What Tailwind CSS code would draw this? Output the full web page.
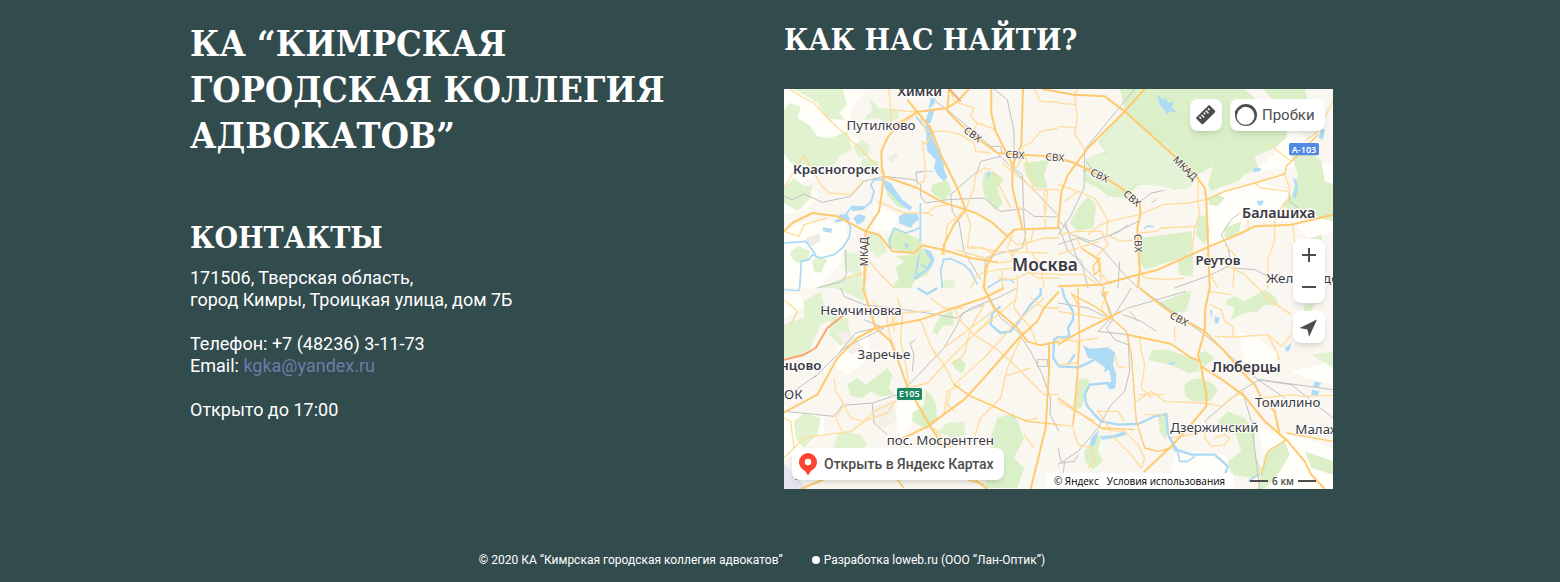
<!DOCTYPE html>
<html lang="ru">
<head>
<meta charset="utf-8">
<meta name="viewport" content="width=device-width, initial-scale=1">
<title>КА “Кимрская городская коллегия адвокатов”</title>
<script src="https://cdn.jsdelivr.net/npm/@tailwindcss/browser@4"></script>
</head>
<body class="min-h-screen bg-[#324b4d] text-white font-['Noto_Sans',sans-serif]">
<main class="mx-auto grid max-w-[1180px] grid-cols-2 gap-2">
  <section class="pt-5">
    <h1 class="max-w-[500px] font-['DejaVu_Serif_Condensed','DejaVu_Serif',serif] text-[36px] leading-[46px] font-bold uppercase">КА “Кимрская городская коллегия адвокатов”</h1>
    <h2 class="mt-[62px] font-['DejaVu_Serif_Condensed','DejaVu_Serif',serif] text-[30px] leading-9 font-bold uppercase">Контакты</h2>
    <address class="mt-[11px] font-[Roboto,sans-serif] text-[18px] leading-[22px] not-italic">
      <p>171506, Тверская область,<br>город Кимры, Троицкая улица, дом 7Б</p>
      <p class="mt-[22px]">Телефон: +7 (48236) 3-11-73<br>Email: <a href="mailto:kgka@yandex.ru" class="text-[#6b7da8]">kgka@yandex.ru</a></p>
      <p class="mt-[22px]">Открыто до 17:00</p>
    </address>
  </section>
  <section class="pt-[22px] pr-[37px]">
    <h2 class="font-['DejaVu_Serif_Condensed','DejaVu_Serif',serif] text-[30px] leading-9 font-bold uppercase">Как нас найти?</h2>
    <div class="relative mt-[31px] h-[400px] overflow-hidden bg-[#faf6f0] text-[#4d4d4d]">
      <svg class="size-full" viewBox="0 0 1647 1200" preserveAspectRatio="xMidYMid slice" fill="none" stroke-linejoin="round" role="img" aria-label="Карта Москвы">
        <!-- north-west -->
        <g transform="translate(0 -3)">
          <g fill="#fffef8">
            <path d="M0 0H250L205 60 190 130 235 165 150 215 60 200 95 260 50 290 110 320 60 370 0 380z"/>
            <path d="M0 430L60 400 180 395 190 440 170 520 140 560 100 600H0zM270 345L340 380 330 430 270 425z"/>
          </g>
          <g fill="#e0f2d0">
            <path d="M30 3H175L190 50 165 75 185 95 130 92 100 45 60 20zM0 65L15 45 50 55 40 90 75 110 100 145 140 150 190 130 205 185 165 205 150 232 100 250 60 230 40 245 0 200z"/>
            <path d="M265 65L255 30 285 60 340 65 345 90 310 110 285 90 240 95 250 80zM205 175L235 155 258 175 250 205 225 208zM0 300L30 270 60 295 85 290 80 330 40 370 0 345zM235 210L285 220 275 255 230 250zM20 490L45 475 78 490 70 520 40 525 20 505zM85 520L100 505 130 515 110 555 90 550z"/>
          </g>
          <g fill="#d9f0c4">
            <path d="M445 290L490 275 503 310 480 340 455 325 440 310zM600 255L630 250 660 275 640 300 655 345 635 370 600 320 595 290zM718 225L795 215 780 260 790 300 755 300 725 260zM330 420L410 455 415 480 375 495 320 480 310 455zM380 500L415 480 450 520 430 560 395 575 380 600H325L345 570 335 540 360 520 335 505zM300 285L330 300 350 330 375 365 340 355 310 320z"/>
            <path d="M250 435L290 440 310 490 280 510 250 480zM180 490L230 500 230 560 180 545zM480 575H512V600H470zM100 600L230 550 240 600z" fill="#e3f3d5"/>
          </g>
          <path d="M310 210L335 195 345 200 320 225zM65 450L105 435 110 460 75 480z" fill="#efebe6"/>
          <g fill="#aedbf5">
            <path d="M440 30L455 32 452 45 435 65 452 65 440 105 422 105 432 75zM425 108L438 110 448 155 465 190 478 215 480 245 490 268 480 280 460 260 450 240 455 215 430 190zM345 385L365 375 400 378 405 395 390 405 380 420 345 405zM200 355L245 355 240 365 205 370zM208 390L225 378 245 385 240 400 220 410zM115 418L145 422 140 435 118 430zM165 378L190 380 200 395 150 405 155 395 170 390zM360 465L375 470 368 485zM608 250L620 255 612 275z"/>
            <path d="M300 275L320 285 330 300 355 335 385 358 378 368 345 345 320 315 303 300zM420 480L440 490 452 515 440 540 395 575 385 570 430 540 440 515 425 495z"/>
          </g>
          <g stroke="#a9d9f5" stroke-width="5">
            <path d="M395 85L425 120M300 275H270L260 290 270 310 262 340 240 360 205 355 185 380 200 420 195 450 175 480 150 500 110 510 85 500 75 515 52 520 47 600M0 465L65 460 95 500M320 480L315 460 330 420 365 435 395 425 412 415M409 345V460M475 515L500 512 540 530 560 550 580 590M480 515L470 545 475 600M405 500L395 560M410 530L430 540M610 600L650 575 680 575 690 585"/>
            <path d="M395 250H450" stroke-width="2"/>
          </g>
          <g stroke="#c2c2c2" stroke-width="3">
            <path d="M0 325L25 335 60 318 115 343 200 325 240 280 300 265 390 275 410 290V325L425 345 490 335 600 330 650 370 720 362 750 385 820 387M400 280L395 255 420 250M455 40L490 65 620 175 660 215 825 385M630 3L670 35 690 130V240L715 260 720 400 725 440 715 480 640 498 605 510 600 600M650 205L590 220 580 250 500 320 505 370 525 400 540 490 590 575M548 495L600 510M185 485L187 560 175 580 100 600M620 175H650L655 200"/>
          </g>
          <g stroke="#ffdd9d" stroke-width="4">
            <path d="M0 300L60 200 110 290 135 315 200 320 240 275M0 430L45 445 60 410 130 390M315 3L320 65 320 120 350 110M350 110L400 75M450 130L425 170 415 160 425 250 420 280M320 65L370 70 400 72M410 90L425 130 490 130 530 140 570 165 575 190 620 195M395 290L420 280M450 385L430 375 360 375 305 350 280 340M430 375L455 355 500 350M500 3L510 40 570 60 560 85 580 105 570 130M580 105L635 125M750 3L770 40 825 42M715 175L740 165 770 130 825 120M620 245L600 240 575 260 570 300 545 365 490 410 480 500M545 370L560 410 550 480 600 480 630 500M625 255L650 300 680 360M655 225L750 305H825M715 180L740 260 750 310M780 310V330L785 420M780 310H790L785 370M720 200L700 235 685 240M720 360L705 360M255 520L290 560 330 600M180 575L235 555M250 525L240 600M515 485L600 510 640 525 680 520 690 495 730 465 780 450 825 450M560 600L580 560 640 545 700 540M620 500L610 540 595 600M670 445L700 470 740 460 750 420M690 425L670 480 700 530 760 570 825 570M740 490L770 530 780 600M640 570L690 575 730 555 825 560M560 475L640 490 790 495M655 545V600M700 560V600M730 490L720 420"/>
            <path d="M20 5L60 30 90 45 130 90 185 140 205 160 280 235 300 262"/>
          </g>
          <g stroke="#ffca6e" stroke-width="6">
            <path d="M555 3L520 40 490 60 400 72 345 105 310 150 292 190 293 235 300 265 290 340 285 370 245 430 240 600M370 35L400 72 440 120 475 210 520 300 545 365 575 375 620 400 670 445 690 425 825 420M300 265L400 300 470 340 545 365M0 430L25 405 85 375 160 385 245 430 285 440 325 490 390 495 415 472 475 485 560 510 640 522M495 3L490 70 530 110 560 135 640 195 825 207M622 3V75L635 130 660 180 685 230V300L715 420M717 3L712 170 685 235M670 445L630 495 605 540 600 600M545 365L510 410 480 470 475 500M775 3L825 12"/>
            <path d="M495 3L530 40" stroke="#fba76a"/>
          </g>
        </g>
        <!-- north-east -->
        <g transform="translate(822 -3)">
          <g fill="#fffef8">
            <path d="M450 330L520 300 600 280 700 310 770 240 828 220V430L760 460 700 400 560 400 500 470 450 470zM660 130L720 120 780 200 700 240 590 250 660 190z"/>
          </g>
          <g fill="#dbf0c8">
            <path d="M185 3H560L600 40 640 70 690 110 685 150 650 180 590 205 600 240 560 260 540 280 480 300 460 310 450 290 465 235 420 260 395 300 350 305 310 290 240 290 205 330 150 325 120 300 80 280 85 210 120 200 140 190 120 160 200 70zM60 360L90 325 115 350 105 420 60 430 35 405zM250 450L360 435 400 430 405 480 385 505 260 545 245 520zM450 330L480 320 500 330 480 355 455 350z"/>
            <path d="M615 3H740L750 40 700 55 650 40zM700 200L740 170 790 220 800 280 828 290V400L780 390 760 360 700 370 670 350 700 320 720 260zM415 390L445 380 455 430 440 470 415 440zM500 420L550 400 540 440 500 450zM720 470L760 450 790 440 800 500 730 500zM360 520L405 490V565L365 560z"/>
          </g>
          <path d="M85 210L120 195 150 200 130 160 200 75 310 160 345 185 420 260 395 300 350 300 240 285 205 305 150 300 85 265z" fill="#e4f2d6"/>
          <path d="M0 3H185L200 70 120 160 140 190 85 210 0 200z" fill="#faf6f0"/>
          <g fill="#aedbf5">
            <path d="M298 20L315 35 325 30 330 45 350 40 340 58 360 75 335 70 328 80 315 60 305 50zM790 120L800 125 795 155 782 150zM585 240L608 242 605 250 585 253zM597 338L618 338 612 352 600 352zM705 270L715 275 720 300 712 335 705 325 712 295z"/>
          </g>
          <path d="M258 422L270 414 288 416M590 240L610 245" stroke="#a9d9f5" stroke-width="4"/>
          <g stroke="#c2c2c2" stroke-width="3">
            <path d="M230 3L80 185 78 300 35 390 0 440M0 395L40 440 100 460 160 440 240 400M240 345L280 315 320 307M280 345L295 335M85 220L100 240 75 250M545 375L520 395 490 440 510 480 520 530 460 560 350 600M150 445L185 430 210 410M0 410L30 490 70 520 90 600M20 400L60 520 140 600M0 470L60 450 130 480 200 560 240 600M695 300V340L720 360M525 540L590 545 640 570 700 580M185 520L180 600"/>
          </g>
          <g stroke="#ffdd9d" stroke-width="4">
            <path d="M60 3L50 20 58 90 50 140 80 185M0 45L55 50M0 115L55 120M420 270V340L425 380 410 420 400 500M245 380L315 350 390 345 445 335M245 435L295 430 310 420 410 415M150 400L245 380M110 330L140 380 150 400 145 440 190 460 240 455M0 290L60 310 110 330M60 310L20 340M90 440L120 415 150 400M0 440L60 430 130 430 150 470 110 510M0 500L60 480 125 460M125 510L130 560 160 590M590 285L610 300 690 310M680 260L695 300 690 340 670 360 650 400V460L630 510V600M570 395V420M705 410L710 470 720 500M445 500L560 560 600 600M245 545L260 570 330 575 380 570M500 470L530 500 525 600M825 40L780 130 740 160M0 560H80L120 590M50 440L70 480 120 510 130 580M455 555L480 600M640 175L700 220"/>
          </g>
          <g stroke="#ffca6e" stroke-width="6">
            <path d="M0 12L50 20 140 25 200 70 350 205 415 265 440 300 445 335 455 600M260 3L200 70 90 180 30 260 10 310 0 420M0 210L50 225 100 250 150 275 205 310 245 345 247 380 238 420 245 545 240 600M0 595L130 590 240 560 300 545 455 475 550 435 590 415 700 410 825 380"/>
            <path d="M445 335L500 310 590 285 680 258 685 235 720 200 780 140M70 480L120 515 125 545 110 560 105 535 125 510" stroke-width="4"/>
          </g>
        </g>
        <!-- south-west -->
        <g transform="translate(0 597)">
          <g fill="#fffef8">
            <path d="M0 20L50 10 60 60 0 90zM190 140L250 130 260 210 190 260 150 230 160 180zM0 370L120 385 120 440 0 520zM340 340L400 340 420 380 390 400 350 450 330 400z"/>
          </g>
          <g fill="#e0f2d0">
            <path d="M60 40L110 10 120 50 165 85 110 110 70 200 0 210V110L60 90zM140 90L190 90 200 150 170 175 135 140zM250 0L240 40 180 10 150 0zM30 400L60 375 110 390 100 440 60 480 35 450zM160 440L180 430 230 440 250 470 240 480H150zM490 405L540 400 545 440 500 450 460 430z"/>
            <path d="M190 290L220 270 245 290 280 265 310 240 325 260 315 300 330 320 290 325 260 310 235 330 200 325zM425 305L445 325 455 345 460 400 430 425 385 400 385 375 420 350zM445 130L465 90 505 65 510 110 475 115 460 140zM505 220L530 210 545 230 535 258 510 240zM620 450L640 390 690 375 720 450 690 510 720 540 700 600H600L620 520z" fill="#daf0c8"/>
          </g>
          <path d="M0 525L40 570 70 603H0z" fill="#e6e6f2"/>
          <path d="M155 130L200 135 240 180 200 200zM270 350L330 350 340 400 300 420 270 400z" fill="#f4efe9"/>
          <g stroke="#a9d9f5" stroke-width="7">
            <path d="M400 0L430 18 460 0M650 55L625 75 620 110 650 135 680 130 705 100 740 50 770 20V0M825 145L810 155 808 210 825 235"/>
            <path d="M0 5L45 8V0" stroke-width="4"/>
          </g>
          <g stroke="#c2c2c2" stroke-width="3">
            <path d="M170 0L180 25 240 50 320 60 410 72 520 90 560 60 640 30 700 0M240 95L300 120 180 180 100 260 0 330M275 120L215 135 160 200 90 270M395 155L378 165 390 200 385 250M0 370L150 385 175 352 265 345 340 320 375 290 480 180 520 110 535 75 600 50M265 345L270 405 310 440M600 0L650 90 700 130 740 190 775 260 800 330 798 380 825 430M760 215H790V235H760z"/>
          </g>
          <g stroke="#ffdd9d" stroke-width="4">
            <path d="M0 35L40 70 20 110M310 80V110L320 150 345 215M325 75L330 130M265 40L310 80M275 125L340 100M340 30L350 60 320 110M350 160L365 230 375 290M350 160L355 75 440 68M410 95L440 175 480 230 510 290 560 325 660 370M510 60L530 100 570 140 640 185 680 220 740 280 780 320 825 320M440 175L460 210M480 180L520 150 600 90 640 60M375 300L430 285 500 210 570 140 700 30M510 290L600 210 700 100 780 30M480 380L490 310 530 290M570 450L590 390 650 330 670 240 720 130M570 140L620 90M600 50L560 120 540 200 500 230M660 265L740 240M150 270L155 310 180 350 200 390 240 400 270 370 330 340M30 480L20 400 0 390M0 510L60 450 130 440 200 430 250 395 310 375 340 330M180 350L155 390 175 430M480 550L500 480 450 420M440 30L480 60 540 60M700 0L690 60 740 120 760 170M740 30L780 60 825 60M510 370L490 350 500 310M720 440L750 480M760 390L720 400"/>
          </g>
          <g stroke="#ffca6e" stroke-width="6">
            <path d="M237 0L275 120 320 160 345 225 370 295 430 400 480 480 540 550 610 603M275 120L220 150 160 210 100 320 0 373M275 120L410 95 480 70 600 30 660 0M350 455L430 415 540 335 600 270 705 150 760 100 780 60 825 10M600 0L630 60 700 120 730 160 770 172 800 165 825 160M795 170V250L785 420 740 603M50 603L130 570 240 530"/>
            <path d="M510 290L560 325 620 350 680 380 730 400 825 410M550 575L600 590M320 550L360 600" stroke-width="4"/>
            <path d="M0 215L60 200 95 180 130 120 180 80" stroke="#fba76a"/>
          </g>
        </g>
        <!-- south-east -->
        <g transform="translate(822 597)">
          <g fill="#fffef8">
            <path d="M350 500L420 490 500 500 540 570 340 555zM600 420L700 440 825 480V603H640zM540 130L600 150 660 200 640 240 560 220zM700 250L825 220V290L740 270z"/>
          </g>
          <g fill="#dbf0c8">
            <path d="M300 45L380 15 400 10 385 70 340 75zM505 35L530 25 560 40 620 5 650 25 665 55 620 50 600 70 560 75 520 95 530 60 505 50zM270 215L285 185 330 185 400 210 420 220 425 250 390 255 340 230 290 220zM425 195L445 190 470 210 440 235 420 220zM380 290L400 275 430 270 470 290 480 310 455 340 400 340 380 320zM55 290L70 270 95 275 90 300 70 360 45 365zM80 490L110 450 130 440 120 490 135 520 105 545 80 520zM300 385L325 380 325 460 305 430z"/>
            <path d="M480 400L510 370 560 390 590 430 590 500 620 560 590 570 520 560 510 520 550 490 530 430 490 420zM620 500L680 460 695 500 660 560 620 603H600zM740 50L770 45 760 70 735 75zM740 490L825 520V560L760 540z"/>
          </g>
          <path d="M760 200L825 190V240z" fill="#e2f3d3"/>
          <g fill="#aedbf5">
            <path d="M75 172L95 182 120 180 150 178 172 195 165 230 175 260 172 300 155 305 145 290 160 280 155 250 110 215 90 210zM470 85L485 90 480 108 470 105zM455 65L463 68 460 90zM680 180L700 165 695 185 685 192zM770 280L790 285 780 300 765 295zM762 305L785 310 778 325 760 320zM100 450L125 425 118 445 110 470 95 475zM130 445L170 440 200 430 205 440 170 450 130 455zM340 475L355 475 362 495 350 490zM330 225L360 222 340 232z"/>
          </g>
          <g stroke="#a9d9f5" stroke-width="7">
            <path d="M12 0L20 30 45 70V95L30 120 35 145 0 150M0 235L60 238 80 230 110 215M140 250L155 225M30 230L50 200M160 290L150 285 95 290 80 320 85 350 110 380 130 400 180 410 240 408 290 385 325 378 330 440 355 485 400 500 470 500 510 535 500 560"/>
            <path d="M360 495L365 520 390 520 410 505M570 580L600 560" stroke-width="5"/>
          </g>
          <g stroke="#c2c2c2" stroke-width="3">
            <path d="M220 0L170 80 120 130 210 140 215 250 200 310 160 350 120 420 60 490 0 530M0 480L10 525 50 520 60 500M0 45L90 60 150 90 210 60 385 10M130 10L150 50 165 95 145 120 170 155 210 170M245 0L440 140 600 275 680 330M195 80L250 100 295 130M545 310L605 275 825 305M545 310L440 400M600 275L700 290 825 390M555 315L580 400 605 603M215 70L240 100M20 520L10 603"/>
          </g>
          <g stroke="#ffdd9d" stroke-width="4">
            <path d="M60 25L65 80 150 95M0 70L60 80M0 150L50 160 120 150M350 115V160M245 150L250 190 260 230 250 300 280 330M170 200L180 235 205 240M280 310L320 340 440 345M0 340L110 400M280 310L235 340M0 410L45 415 60 300 60 160M470 145L530 147 630 140 655 190 665 215M630 140L670 175 700 140M455 50L490 65 500 100 525 115V145M455 10L520 20M600 0L640 40 700 80M440 345L490 355 520 330 560 310M445 400L440 450 460 475 500 470 515 450 500 440 470 450M560 265L600 230M610 330L700 320 740 325 825 322M115 370H180L200 400M120 370L160 430M660 200V215M130 425L200 430 240 470 260 510 250 540 220 500 160 440M260 380L320 380M45 420L60 470 100 480 110 520 90 540M240 320L320 320M0 230L60 225M340 450L450 430M150 10L130 60 150 95"/>
          </g>
          <g stroke="#ffca6e" stroke-width="6">
            <path d="M455 0L442 60 440 130 420 200 430 240 445 320 445 355 390 420 340 475 258 552M245 0L300 45 340 75 440 130 500 190 560 260 590 290 610 330 650 370 665 440 685 455M430 235L500 280 560 325 620 400 685 455 740 520 760 560 800 603M0 170L60 135 190 70M210 140L340 168 400 210 430 220"/>
            <path d="M135 0L145 45 160 90 205 130 220 200 235 400 260 480 300 490 340 480M40 15L60 50M60 0L65 170 45 410M0 330L130 420 230 425M40 18L110 55 165 95M685 435L825 460M685 455L630 490 610 560M130 25L150 10" stroke-width="4"/>
          </g>
        </g>
        <!-- road shields -->
        <rect x="1515" y="162" width="90" height="37" rx="5" fill="#5289e4"/>
        <rect x="339" y="897" width="75" height="36" rx="5" fill="#1b8a62"/>
        <g fill="#fff" font-family="'Noto Sans',sans-serif" font-weight="600" font-size="27" text-anchor="middle">
          <text x="1560" y="191">А-103</text>
          <text x="376" y="925">E105</text>
        </g>
        <!-- place names -->
        <g font-family="'Noto Sans',sans-serif" fill="#3b3b45" stroke="#fff" stroke-opacity=".85" stroke-width="7" paint-order="stroke" font-size="40" text-anchor="middle">
          <text x="291" y="122">Путилково</text>
          <text x="231" y="677">Немчиновка</text>
          <text x="300" y="809">Заречье</text>
          <text x="28" y="931">ОК</text>
          <text x="469" y="1069">пос. Мосрентген</text>
          <text x="1291" y="1029">Дзержинский</text>
          <text x="1511" y="954">Томилино</text>
          <text x="1534" y="1035" text-anchor="start">Малаховка</text>
          <text x="1447" y="583" text-anchor="start">Железнодо</text>
          <g font-weight="600">
            <text x="407" y="22">Химки</text>
            <text x="155" y="255">Красногорск</text>
            <text x="1302" y="528">Реутов</text>
            <text x="112" y="844" text-anchor="end">Одинцово</text>
            <text x="1484" y="386" font-size="43">Балашиха</text>
            <text x="1387" y="849" font-size="43">Люберцы</text>
            <text x="783" y="546" font-size="52">Москва</text>
          </g>
          <text x="60" y="1174" font-size="30" font-weight="600" fill="#4b5a8c">Уно</text>
        </g>
        <!-- road names -->
        <g font-family="'Noto Sans',sans-serif" fill="#3b3b45" stroke="#fff" stroke-opacity=".8" stroke-width="5" paint-order="stroke" font-size="30" text-anchor="middle">
          <text transform="translate(560 145) rotate(36)">СВХ</text>
          <text transform="translate(692 208) rotate(4)">СВХ</text>
          <text transform="translate(812 216) rotate(4)">СВХ</text>
          <text transform="translate(942 269) rotate(26)">СВХ</text>
          <text transform="translate(1037 336) rotate(42)">СВХ</text>
          <text transform="translate(1052 463) rotate(88)">СВХ</text>
          <text transform="translate(1180 699) rotate(29)">СВХ</text>
          <text transform="translate(1196 245) rotate(44)">МКАД</text>
          <text transform="translate(253 488) rotate(-90)">МКАД</text>
        </g>
      </svg>
      <div class="absolute top-[10px] right-2 flex gap-2">
        <button type="button" aria-label="Линейка" class="grid size-8 place-items-center rounded-lg bg-white shadow-md">
          <svg class="size-6" viewBox="0 0 24 24"><g transform="rotate(-45 12 12)"><rect x="2.500" y="7.500" width="19" height="9" rx="1.500" fill="#4d4d4d"/><path d="M5.500 7.500v3.500M8.500 7.500v5M11.500 7.500v3.500M14.500 7.500v5M17.500 7.500v3.500" transform="translate(.5 0)" stroke="#fff" stroke-width="1.300"/><rect x="2.500" y="7" width="19" height="1.700" rx=".8" fill="#4d4d4d"/></g></svg>
        </button>
        <button type="button" class="flex h-8 w-[95px] items-center gap-1 rounded-lg bg-white pl-1 font-[Roboto,sans-serif] text-[15px] shadow-md">
          <svg class="size-6 shrink-0" viewBox="0 0 24 24"><path fill-rule="evenodd" d="M12 1a11 11 0 1 1 0 22a11 11 0 1 1 0-22zM11.500 3.800a9 9 0 1 0 0 18a9 9 0 1 0 0-18z" fill="#4d4d4d"/><path d="M4 4.500L1 8.500v4l2-1 1.500-4 4-3z" fill="#4d4d4d"/></svg>
          Пробки
        </button>
      </div>
      <div class="absolute top-[150px] right-2 flex flex-col gap-2">
        <div class="flex flex-col overflow-hidden rounded-lg bg-white shadow-md">
          <button type="button" aria-label="Приблизить" class="grid size-8 place-items-center"><svg class="size-6" viewBox="0 0 24 24" stroke="#4d4d4d" stroke-width="2"><path d="M5 12h14M12 5v14"/></svg></button>
          <button type="button" aria-label="Отдалить" class="grid size-8 place-items-center"><svg class="size-6" viewBox="0 0 24 24" stroke="#4d4d4d" stroke-width="2"><path d="M5 12h14"/></svg></button>
        </div>
        <button type="button" aria-label="Моё местоположение" class="grid size-8 place-items-center rounded-lg bg-white shadow-md"><svg class="size-6" viewBox="0 0 24 24" fill="#4d4d4d"><path d="M20 4.500L2.500 13l8 1.500L12 22z"/></svg></button>
      </div>
      <a href="#" class="absolute bottom-[9px] left-2 flex h-8 w-[212px] items-center gap-1 rounded-lg bg-white pl-1 font-[Roboto,sans-serif] text-sm font-medium whitespace-nowrap shadow-md">
        <svg class="size-6 shrink-0" viewBox="0 0 24 24"><path d="M12 1a9 9 0 0 0-9 9c0 5 4 7.500 6.500 9.500L12 23.500l2.500-4C17 17.500 21 15 21 10a9 9 0 0 0-9-9z" fill="#f43"/><circle cx="12" cy="10" r="3.200" fill="#fff"/></svg>
        Открыть в Яндекс Картах
      </a>
      <div class="absolute right-2 bottom-0 flex h-4 items-center font-['Open_Sans',sans-serif] text-[10px] whitespace-nowrap text-black">
        <div class="flex h-4 items-center gap-2 bg-white/90 px-2"><a href="#">© Яндекс</a><a href="#">Условия использования</a></div>
        <div class="ml-[17px] flex items-center gap-1 pr-[9px] font-semibold text-[#4d4d4d]"><span class="h-0.5 w-[18px] bg-[#4d4d4d]"></span>6 км<span class="h-0.5 w-[18px] bg-[#4d4d4d]"></span></div>
      </div>
    </div>
  </section>
</main>
<footer class="mt-[62px] flex justify-center gap-[29px] pr-9 pb-3 font-[Roboto,sans-serif] text-xs leading-[18px]">
  <p>© 2020 КА “Кимрская городская коллегия адвокатов”</p>
  <p class="flex items-center gap-1"><span class="size-2 rounded-full bg-white"></span>Разработка loweb.ru (ООО “Лан-Оптик”)</p>
</footer>
</body>
</html>
